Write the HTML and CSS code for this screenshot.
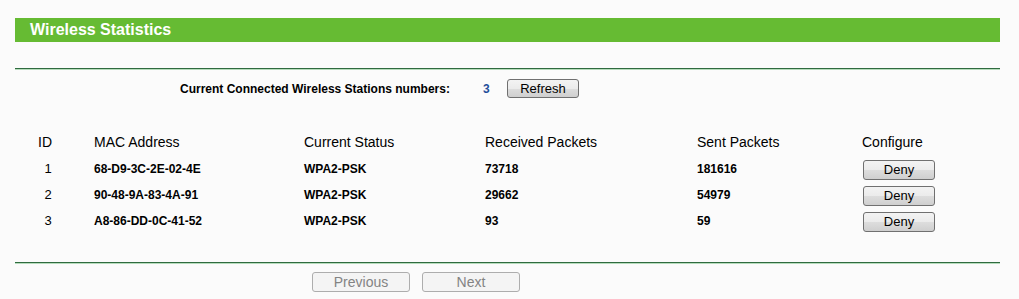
FILE: index.html
```html
<!doctype html>
<html lang="en">
<head>
    <meta charset="UTF-8">
    <title>Wireless Statistics</title>
    <link rel="stylesheet" href="styles.css">
</head>
<body>
<div class="page">
    <div class="title_bar">Wireless Statistics</div>
    <div class="rule"></div>

    <div class="stations">
        <span class="stations_label">Current Connected Wireless Stations numbers:</span>
        <span class="stations_num">3</span>
        <button class="btn btn_refresh">Refresh</button>
    </div>

    <div class="stat_table">
        <div class="cell head id">ID</div>
        <div class="cell head">MAC Address</div>
        <div class="cell head">Current Status</div>
        <div class="cell head">Received Packets</div>
        <div class="cell head">Sent Packets</div>
        <div class="cell head">Configure</div>

        <div class="cell id">1</div>
        <div class="cell">68-D9-3C-2E-02-4E</div>
        <div class="cell">WPA2-PSK</div>
        <div class="cell">73718</div>
        <div class="cell">181616</div>
        <div class="cell"><button class="btn btn_deny">Deny</button></div>

        <div class="cell id">2</div>
        <div class="cell">90-48-9A-83-4A-91</div>
        <div class="cell">WPA2-PSK</div>
        <div class="cell">29662</div>
        <div class="cell">54979</div>
        <div class="cell"><button class="btn btn_deny">Deny</button></div>

        <div class="cell id">3</div>
        <div class="cell">A8-86-DD-0C-41-52</div>
        <div class="cell">WPA2-PSK</div>
        <div class="cell">93</div>
        <div class="cell">59</div>
        <div class="cell"><button class="btn btn_deny">Deny</button></div>
    </div>

    <div class="rule rule_bottom"></div>

    <div class="pager">
        <button class="btn btn_page" disabled>Previous</button>
        <button class="btn btn_page" disabled>Next</button>
    </div>
</div>
</body>
</html>
```

FILE: styles.css
```css
* {
    margin: 0;
    padding: 0;
    box-sizing: border-box;
}

body {
    background: #fbfbfb;
    font-family: "Liberation Sans", Arial, sans-serif;
    color: #000;
}

.page {
    margin: 18px 19px 0 15px;
}

.title_bar {
    height: 24px;
    line-height: 24px;
    padding-left: 15px;
    background: #66bb33;
    color: #fff;
    font-size: 16px;
    font-weight: bold;
}

.rule {
    margin-top: 26px;
    height: 2px;
    border-top: 1px solid #2f6b3f;
    border-bottom: 1px solid #b6dcbc;
}

.stations {
    display: flex;
    align-items: center;
    margin-top: 9px;
    padding-left: 165px;
    height: 19px;
    font-size: 12px;
    font-weight: bold;
}

.stations_label {
    width: 303px;
}

.stations_num {
    width: 24px;
    color: #1f4e9a;
}

.btn {
    font-family: "Liberation Sans", Arial, sans-serif;
    font-size: 13px;
    color: #000;
    border: 1px solid #707070;
    border-radius: 3px;
    background: linear-gradient(#f3f3f3, #ebebeb 50%, #dddddd 51%, #cfcfcf);
}

.btn_refresh {
    width: 72px;
    height: 19px;
}

.stat_table {
    display: grid;
    grid-template-columns: 79px 210px 181px 212px 165px 1fr;
    grid-auto-rows: 26px;
    margin-top: 31px;
    font-size: 12px;
    font-weight: bold;
}

.cell {
    display: flex;
    align-items: center;
    padding-top: 1px;
}

.cell.head {
    font-size: 14px;
    font-weight: normal;
    padding-top: 0;
}

.cell.id {
    justify-content: center;
    padding-right: 13px;
    font-size: 13px;
    font-weight: normal;
}

.cell.head.id {
    padding-right: 19px;
    font-size: 14px;
}

.btn_deny {
    width: 72px;
    height: 20px;
    margin-left: 1px;
    margin-top: 2px;
}

.rule_bottom {
    margin-top: 29px;
}

.pager {
    display: flex;
    gap: 12px;
    margin-top: 8px;
    padding-left: 297px;
}

.btn_page {
    width: 98px;
    height: 20px;
    font-size: 14px;
    color: #838383;
    border-color: #adadad;
    background: #f4f4f4;
}
```
